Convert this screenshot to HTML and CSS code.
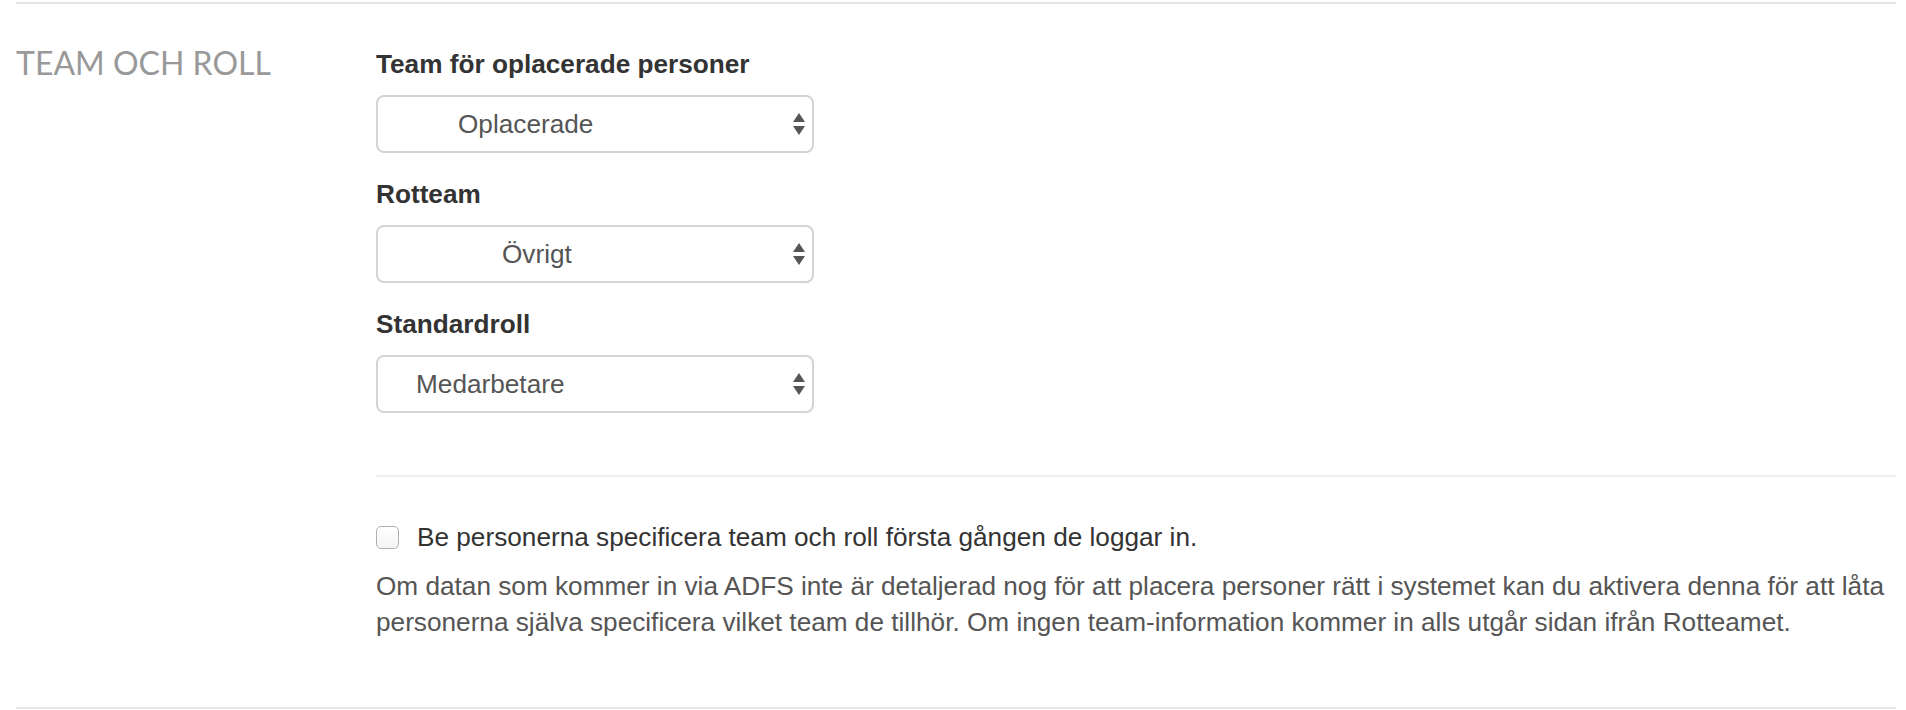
FILE: index.html
```html
<!DOCTYPE html>
<html lang="sv">
<head>
    <meta charset="UTF-8">
    <meta name="viewport" content="width=device-width, initial-scale=1.0">
    <title>Team och roll</title>
    <link rel="stylesheet" href="styles.css">
</head>
<body>
    <div class="section">
        <div class="section-title">TEAM OCH ROLL</div>
        <div class="section-body">
            <div class="form-group">
                <label class="field-label" for="unplaced">Team för oplacerade personer</label>
                <div class="select-wrap">
                    <select class="field-select indent-md" id="unplaced">
                        <option>Oplacerade</option>
                    </select>
                    <svg class="select-arrows" width="12" height="22" viewBox="0 0 12 22">
                        <polygon points="6,0 12,9 0,9"/>
                        <polygon points="0,13 12,13 6,22"/>
                    </svg>
                </div>
            </div>
            <div class="form-group">
                <label class="field-label" for="root">Rotteam</label>
                <div class="select-wrap">
                    <select class="field-select indent-lg" id="root">
                        <option>Övrigt</option>
                    </select>
                    <svg class="select-arrows" width="12" height="22" viewBox="0 0 12 22">
                        <polygon points="6,0 12,9 0,9"/>
                        <polygon points="0,13 12,13 6,22"/>
                    </svg>
                </div>
            </div>
            <div class="form-group">
                <label class="field-label" for="role">Standardroll</label>
                <div class="select-wrap">
                    <select class="field-select indent-sm" id="role">
                        <option>Medarbetare</option>
                    </select>
                    <svg class="select-arrows" width="12" height="22" viewBox="0 0 12 22">
                        <polygon points="6,0 12,9 0,9"/>
                        <polygon points="0,13 12,13 6,22"/>
                    </svg>
                </div>
            </div>

            <hr class="divider">

            <label class="check-row">
                <input type="checkbox" class="check-box">
                <span>Be personerna specificera team och roll första gången de loggar in.</span>
            </label>
            <p class="help">Om datan som kommer in via ADFS inte är detaljerad nog för att placera personer rätt i systemet kan du aktivera denna för att låta personerna själva specificera vilket team de tillhör. Om ingen team-information kommer in alls utgår sidan ifrån Rotteamet.</p>
        </div>
    </div>
</body>
</html>
```

FILE: styles.css
```css
*{
    margin: 0;
    padding: 0;
    box-sizing: border-box;
}
html,body{
    width: 100%;
    height: 100%;
    background-color: #fff;
}
body{
    padding-top: 2px;
    font-family: "Liberation Sans", Arial, sans-serif;
    font-size: 26.2px;
    color: #333;
    overflow: hidden;
}
.section{
    margin: 0 10px 0 16px;
    border-top: 2px solid #e6e6e6;
    border-bottom: 2px solid #e6e6e6;
    display: grid;
    grid-template-columns: 360px 1fr;
    padding-top: 40px;
    padding-bottom: 67px;
}
.section-title{
    font-family: Lato, sans-serif;
    font-size: 32px;
    line-height: 1.2;
    color: #999;
}
.section-body{
    padding-top: 3px;
}
.form-group{
    margin-bottom: 24px;
}
.field-label{
    display: block;
    font-weight: 700;
    line-height: 35px;
    margin-bottom: 13px;
    color: #333;
}
.select-wrap{
    position: relative;
    width: 438px;
    height: 58px;
}
.field-select{
    appearance: none;
    -webkit-appearance: none;
    width: 100%;
    height: 100%;
    border: 2px solid #d4d4d4;
    border-radius: 8px;
    background-color: #fff;
    font-family: "Liberation Sans", Arial, sans-serif;
    font-size: 26.2px;
    color: #555;
    outline: none;
}
.indent-sm{ padding-left: 38px; }
.indent-md{ padding-left: 80px; }
.indent-lg{ padding-left: 124px; }
.select-arrows{
    position: absolute;
    right: 9px;
    top: 18px;
    fill: #555;
}
.divider{
    border: 0;
    border-top: 2px solid #eee;
    margin-top: 62px;
    margin-bottom: 43px;
}
.check-row{
    display: flex;
    align-items: center;
    gap: 18px;
    line-height: 35px;
    color: #333;
}
.check-box{
    appearance: none;
    -webkit-appearance: none;
    width: 23px;
    height: 23px;
    border: 1.5px solid #b0b0b0;
    border-radius: 5px;
    background: linear-gradient(#fff, #f4f4f4);
    flex-shrink: 0;
}
.help{
    margin-top: 13px;
    line-height: 36px;
    color: #555;
}
```
